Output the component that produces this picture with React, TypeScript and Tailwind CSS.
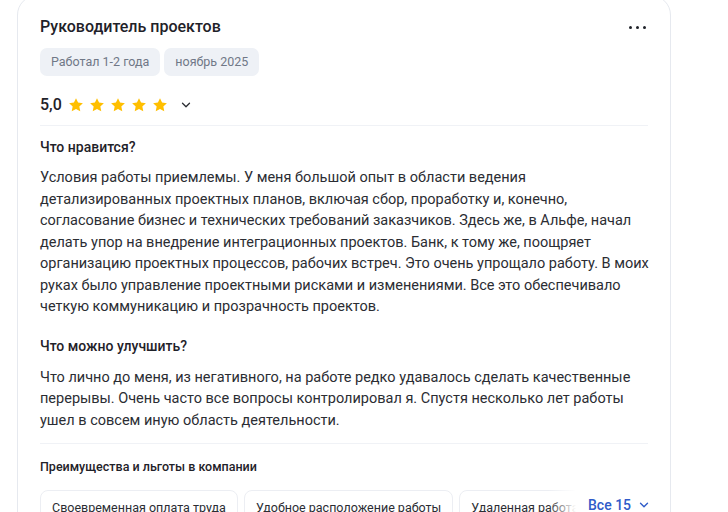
import { ChevronDown } from 'lucide-react';

const font = { fontFamily: 'Roboto, "Noto Sans", sans-serif' };

function Star() {
  return (
    <svg width="16" height="16" viewBox="0 0 24 24" className="shrink-0">
      <path
        fill="#ffbf00"
        d="M12 1.8l3.1 6.6 7.2.9-5.3 5 1.4 7.1L12 17.9l-6.4 3.5 1.4-7.1-5.3-5 7.2-.9z"
      />
    </svg>
  );
}

// строки как в макете
const liked = [
  'Условия работы приемлемы. У меня большой опыт в области ведения',
  'детализированных проектных планов, включая сбор, проработку и, конечно,',
  'согласование бизнес и технических требований заказчиков. Здесь же, в Альфе, начал',
  'делать упор на внедрение интеграционных проектов. Банк, к тому же, поощряет',
  'организацию проектных процессов, рабочих встреч. Это очень упрощало работу. В моих',
  'руках было управление проектными рисками и изменениями. Все это обеспечивало',
  'четкую коммуникацию и прозрачность проектов.',
];

const improve = [
  'Что лично до меня, из негативного, на работе редко удавалось сделать качественные',
  'перерывы. Очень часто все вопросы контролировал я. Спустя несколько лет работы',
  'ушел в совсем иную область деятельности.',
];

const benefits = ['Своевременная оплата труда', 'Удобное расположение работы', 'Удаленная работа'];

function Text({ lines }: { lines: string[] }) {
  return (
    <p className="text-[14.5px] leading-[21.5px] whitespace-nowrap text-[#2b2d33]">
      {lines.map((l, i) => (
        <span key={i} className="block">
          {l}
        </span>
      ))}
    </p>
  );
}

export default function App() {
  return (
    <div className="h-[512px] w-[728px] overflow-hidden bg-white" style={font}>
      <div className="ml-[17px] -mt-[5px] w-[654px] rounded-[20px] border border-[#e6e9ef] px-[22px] pt-[21px] pb-6">
        {/* шапка */}
        <div className="flex items-center justify-between">
          <h2 className="text-[16px] leading-5 font-medium text-[#1f2229]">Руководитель проектов</h2>
          <button className="mr-[2px] flex h-5 items-center gap-[2px]">
            <span className="h-[3px] w-[3px] rounded-full bg-[#1f2229]" />
            <span className="ml-[2px] h-[3px] w-[3px] rounded-full bg-[#1f2229]" />
            <span className="ml-[2px] h-[3px] w-[3px] rounded-full bg-[#1f2229]" />
          </button>
        </div>

        <div className="mt-[11px] flex gap-1">
          <span className="flex h-[28px] items-center rounded-[7px] bg-[#eef1f6] px-[11px] text-[12.5px] text-[#707887]">
            Работал 1-2 года
          </span>
          <span className="flex h-[28px] items-center rounded-[7px] bg-[#eef1f6] px-[11px] text-[12.5px] text-[#707887]">
            ноябрь 2025
          </span>
        </div>

        <div className="mt-[19px] flex h-5 items-center">
          <span className="text-[16px] font-medium text-[#1f2229]">5,0</span>
          <div className="ml-[6px] flex gap-[5px]">
            <Star />
            <Star />
            <Star />
            <Star />
            <Star />
          </div>
          <ChevronDown size={14} strokeWidth={2.2} className="ml-[11px] text-[#2b2d33]" />
        </div>

        <div className="mt-[10px] h-px bg-[#f0f2f6]" />

        {/* отзыв */}
        <h3 className="mt-[11px] text-[14px] leading-5 font-medium text-[#1f2229]">Что нравится?</h3>
        <div className="mt-[10px]">
          <Text lines={liked} />
        </div>

        <h3 className="mt-[18px] text-[14px] leading-5 font-medium text-[#1f2229]">Что можно улучшить?</h3>
        <div className="mt-[11px]">
          <Text lines={improve} />
        </div>

        <div className="mt-[12px] h-px bg-[#f0f2f6]" />

        {/* льготы */}
        <h4 className="mt-[15px] text-[12.5px] leading-4 font-medium text-[#1f2229]">
          Преимущества и льготы в компании
        </h4>
        <div className="mt-[15px] flex items-start">
          <div className="relative flex w-[536px] shrink-0 gap-[6px] overflow-hidden">
            {benefits.map((b) => (
              <span
                key={b}
                className="flex h-[36px] shrink-0 items-center rounded-[8px] border border-[#eceef3] px-[11px] text-[12.5px] whitespace-nowrap text-[#2b2d33]"
              >
                {b}
              </span>
            ))}
            <div className="absolute top-0 right-0 h-full w-[28px] bg-gradient-to-r from-white/0 to-white" />
          </div>
          <button className="ml-[12px] flex h-[30px] items-center gap-[6px] text-[14px] font-medium whitespace-nowrap text-[#2f5bc9]">
            Все 15
            <ChevronDown size={14} strokeWidth={2.4} />
          </button>
        </div>
      </div>
    </div>
  );
}
